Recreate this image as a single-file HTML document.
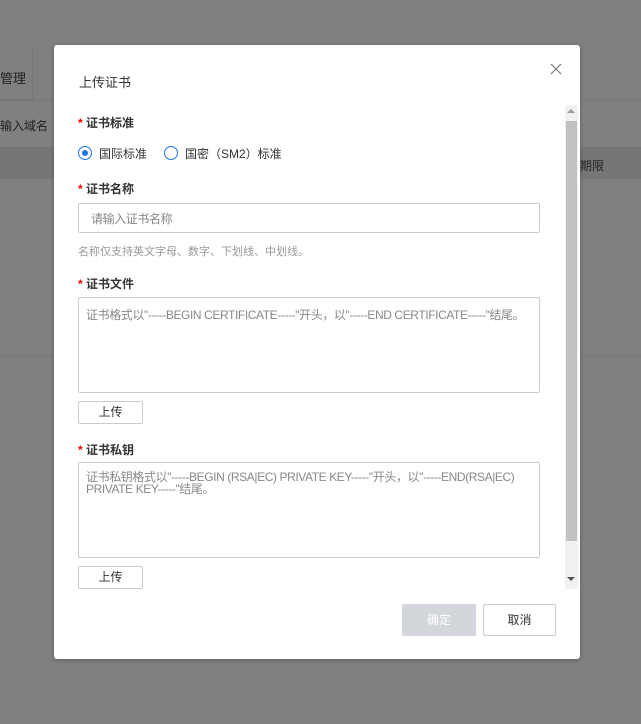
<!DOCTYPE html>
<html><head><meta charset="utf-8"><style>
*{margin:0;padding:0;box-sizing:border-box}
body{width:641px;height:724px;position:relative;overflow:hidden;background:#808080;font-family:"Liberation Sans","Noto Sans CJK SC",sans-serif;color:#333}
.a{position:absolute}
.lbl{font-size:12px;font-weight:bold;color:#333}
.lbl:before{content:"* ";color:#e00;font-weight:bold}
.box{border:1px solid #c8ccd2;border-radius:2px;background:#fff}
.btn{border:1px solid #c8ccd2;background:#fff;font-size:12px;text-align:center;border-radius:2px}
.ph{font-size:12px;color:#888;letter-spacing:-0.4px}
</style></head><body>
<div class="a" style="left:0;top:47px;width:33px;height:53px;border:1px solid #757575;border-left:none;border-top:none"></div>
<div class="a" style="left:0;top:100px;width:641px;height:1px;background:#777"></div>
<div class="a" style="left:0;top:68px;font-size:13px;color:#222">管理</div>
<div class="a" style="left:0;top:117px;font-size:12px;color:#222">输入域名</div>
<div class="a" style="left:0;top:147px;width:641px;height:32px;background:#767676"></div>
<div class="a" style="left:580px;top:157px;font-size:12px;color:#222">期限</div>
<div class="a" style="left:0;top:355px;width:641px;height:1px;background:#777"></div>

<div class="a" style="left:54px;top:45px;width:526px;height:614px;background:#fff;border-radius:3px;box-shadow:0 1px 4px rgba(0,0,0,.3)">
</div>
<div class="a" style="left:79px;top:72px;font-size:13px;color:#333">上传证书</div>
<svg class="a" style="left:550px;top:63px" width="12" height="12"><path d="M1 1L11 11M11 1L1 11" stroke="#777" stroke-width="1.2"/></svg>

<div class="a" style="left:565px;top:105px;width:13px;height:484px;background:#f1f1f1"></div>
<div class="a" style="left:566px;top:121px;width:11px;height:420px;background:#c1c1c1"></div>
<svg class="a" style="left:567px;top:108px" width="8" height="6"><path d="M0 5L4 1L8 5Z" fill="#999"/></svg>
<svg class="a" style="left:567px;top:576px" width="8" height="6"><path d="M0 1L8 1L4 5Z" fill="#555"/></svg>

<div class="a lbl" style="left:78px;top:114px">证书标准</div>
<div class="a" style="left:78px;top:146px;width:14px;height:14px;border:1px solid #1a73e8;border-radius:50%"></div>
<div class="a" style="left:82px;top:150px;width:6px;height:6px;background:#1a73e8;border-radius:50%"></div>
<div class="a" style="left:99px;top:145px;font-size:12px">国际标准</div>
<div class="a" style="left:164px;top:146px;width:14px;height:14px;border:1px solid #1a73e8;border-radius:50%"></div>
<div class="a" style="left:185px;top:145px;font-size:12px">国密（SM2）标准</div>

<div class="a lbl" style="left:78px;top:180px">证书名称</div>
<div class="a box" style="left:78px;top:203px;width:462px;height:30px"></div>
<div class="a ph" style="left:91px;top:210px">请输入证书名称</div>
<div class="a" style="left:78px;top:243px;font-size:11px;color:#999">名称仅支持英文字母、数字、下划线、中划线。</div>

<div class="a lbl" style="left:78px;top:275px">证书文件</div>
<div class="a box" style="left:78px;top:297px;width:462px;height:96px"></div>
<div class="a ph" style="left:86px;top:306px">证书格式以"-----BEGIN CERTIFICATE-----"开头，以"-----END CERTIFICATE-----"结尾。</div>
<div class="a btn" style="left:78px;top:401px;width:65px;height:23px;line-height:21px">上传</div>

<div class="a lbl" style="left:78px;top:441px">证书私钥</div>
<div class="a box" style="left:78px;top:462px;width:462px;height:96px"></div>
<div class="a ph" style="left:86px;top:471px;width:440px;line-height:12px">证书私钥格式以"-----BEGIN (RSA|EC) PRIVATE KEY-----"开头，以"-----END(RSA|EC) PRIVATE KEY-----"结尾。</div>
<div class="a btn" style="left:78px;top:566px;width:65px;height:23px;line-height:21px">上传</div>

<div class="a btn" style="left:402px;top:604px;width:74px;height:32px;line-height:30px;background:#d3d6da;border-color:#d3d6da;color:#fff">确定</div>
<div class="a btn" style="left:483px;top:604px;width:73px;height:32px;line-height:30px">取消</div>
</body></html>
